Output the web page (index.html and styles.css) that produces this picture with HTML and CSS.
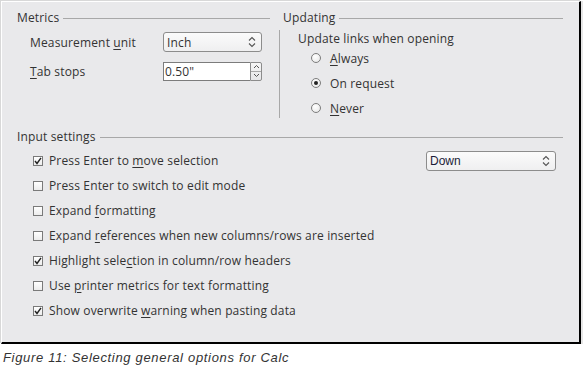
FILE: index.html
```html
<!DOCTYPE html>
<html>
<head>
<meta charset="utf-8">
<link rel="stylesheet" href="styles.css">
</head>
<body>
<div class="panel">
  <div class="top">
    <section class="col metrics">
      <div class="legend"><span>Metrics</span><i class="rule"></i></div>
      <div class="field-row first">
        <span class="lbl">Measurement <u>u</u>nit</span>
        <div class="select unit"><span class="val">Inch</span>
          <svg class="updown" width="8" height="12" viewBox="0 0 8 12"><path d="M1 4.5 L4 1.5 L7 4.5 M1 7.5 L4 10.5 L7 7.5" fill="none" stroke="#555" stroke-width="1.1"/></svg>
        </div>
      </div>
      <div class="field-row">
        <span class="lbl"><u>T</u>ab stops</span>
        <div class="spin"><span class="spin-input">0.50"</span>
          <span class="spin-btns">
            <span class="sb"><svg width="7" height="5" viewBox="0 0 7 5"><path d="M1 4 L3.5 1.5 L6 4" fill="none" stroke="#555" stroke-width="1"/></svg></span>
            <span class="sb"><svg width="7" height="5" viewBox="0 0 7 5"><path d="M1 1 L3.5 3.5 L6 1" fill="none" stroke="#555" stroke-width="1"/></svg></span>
          </span>
        </div>
      </div>
    </section>
    <section class="col updating">
      <div class="legend"><span>Updating</span><i class="rule"></i></div>
      <div class="upd-body">
        <div class="upd-title">Update links when opening</div>
        <div class="radios">
          <div class="radio-row"><span class="radio"></span><span><u>A</u>lways</span></div>
          <div class="radio-row"><span class="radio on"></span><span>On request</span></div>
          <div class="radio-row"><span class="radio"></span><span><u>N</u>ever</span></div>
        </div>
      </div>
    </section>
  </div>
  <section class="input">
    <div class="legend"><span>Input settings</span><i class="rule"></i></div>
    <div class="checks">
      <div class="check-row">
        <span class="cb on"><svg width="8" height="8" viewBox="0 0 8 8"><path d="M1 4 L3 6.5 L7 0.8" fill="none" stroke="#222" stroke-width="1.4"/></svg></span>
        <span>Press Enter to <u>m</u>ove selection</span>
        <div class="select down"><span class="val">Down</span>
          <svg class="updown" width="8" height="12" viewBox="0 0 8 12"><path d="M1 4.5 L4 1.5 L7 4.5 M1 7.5 L4 10.5 L7 7.5" fill="none" stroke="#555" stroke-width="1.1"/></svg>
        </div>
      </div>
      <div class="check-row"><span class="cb"></span><span>Press Enter to switch to edit mode</span></div>
      <div class="check-row"><span class="cb"></span><span>Expand <u>f</u>ormatting</span></div>
      <div class="check-row"><span class="cb"></span><span>Expand <u>r</u>eferences when new columns/rows are inserted</span></div>
      <div class="check-row">
        <span class="cb on"><svg width="8" height="8" viewBox="0 0 8 8"><path d="M1 4 L3 6.5 L7 0.8" fill="none" stroke="#222" stroke-width="1.4"/></svg></span>
        <span>Highlight sele<u>c</u>tion in column/row headers</span></div>
      <div class="check-row"><span class="cb"></span><span>Use <u>p</u>rinter metrics for text formatting</span></div>
      <div class="check-row">
        <span class="cb on"><svg width="8" height="8" viewBox="0 0 8 8"><path d="M1 4 L3 6.5 L7 0.8" fill="none" stroke="#222" stroke-width="1.4"/></svg></span>
        <span>Show overwrite <u>w</u>arning when pasting data</span></div>
    </div>
  </section>
</div>
<p class="caption">Figure 11: Selecting general options for Calc</p>
</body>
</html>
```

FILE: styles.css
```css
html, body {
  margin: 0;
  padding: 0;
  background: #ffffff;
}

body {
  width: 583px;
  height: 376px;
  overflow: hidden;
}

.panel {
  box-sizing: border-box;
  margin: 1px 0 0 1px;
  width: 580px;
  height: 343px;
  background: #e9e9eb;
  border-top: 1px solid #ffffff;
  border-left: 1px solid #ffffff;
  border-right: 2px solid #000000;
  border-bottom: 2px solid #000000;
  box-shadow: -1px -1px 0 #d8d8d8, 2px 0 0 #e6e6e6;
  padding: 8px 16px 0 15px;
  font-family: "Open Sans", "DejaVu Sans", sans-serif;
  font-size: 12px;
  letter-spacing: 0.15px;
  color: #333333;
}

u {
  text-decoration: underline;
  text-underline-offset: 2px;
}

.top {
  display: flex;
}

.col {
  display: flex;
  flex-direction: column;
}

.metrics {
  width: 253px;
}

.updating {
  width: 280px;
  margin-left: 13px;
}

.legend {
  display: flex;
  align-items: center;
  height: 16px;
  line-height: 16px;
  white-space: nowrap;
}

.legend .rule {
  flex: 1;
  height: 1px;
  background: #a8a8a8;
  margin-left: 4px;
}

.field-row {
  display: flex;
  align-items: center;
  height: 20px;
  margin-top: 9px;
  padding-left: 13px;
}

.field-row.first {
  margin-top: 6px;
}

.lbl {
  width: 133px;
  white-space: nowrap;
}

.select {
  box-sizing: border-box;
  height: 20px;
  border: 1px solid #8c8c8c;
  border-radius: 3px;
  background: linear-gradient(#fbfbfb, #efeff0);
  display: flex;
  align-items: center;
  padding: 0 5px 0 3px;
}

.select .val {
  flex: 1;
}

.select.unit {
  width: 99px;
}

.updown {
  display: block;
}

.spin {
  display: flex;
  height: 19px;
}

.spin-input {
  box-sizing: border-box;
  width: 87px;
  height: 19px;
  background: #ffffff;
  border: 1px solid #7c7c7c;
  border-right: none;
  line-height: 17px;
  padding-left: 1px;
}

.spin-btns {
  box-sizing: border-box;
  width: 12px;
  height: 19px;
  border: 1px solid #8c8c8c;
  border-radius: 0 2px 2px 0;
  display: flex;
  flex-direction: column;
  background: linear-gradient(#f6f6f6, #e6e6e8);
}

.sb {
  flex: 1;
  display: flex;
  align-items: center;
  justify-content: center;
}

.sb + .sb {
  border-top: 1px solid #a8a8a8;
}

.sb svg {
  display: block;
}

.upd-body {
  margin-top: 4px;
  margin-left: -4px;
  height: 88px;
  box-sizing: border-box;
  border-left: 1px solid #a8a8a8;
  padding: 1px 0 0 18px;
}

.upd-title {
  height: 16px;
  line-height: 16px;
}

.radios {
  margin-top: 3px;
  display: flex;
  flex-direction: column;
  gap: 9px;
}

.radio-row {
  display: flex;
  align-items: center;
  height: 16px;
  padding-left: 13px;
}

.radio {
  box-sizing: border-box;
  width: 10px;
  height: 10px;
  border-radius: 50%;
  border: 1px solid #7d7d7d;
  background: radial-gradient(circle at 40% 35%, #ffffff, #e4e4e4);
  margin-right: 9px;
  position: relative;
}

.radio.on::after {
  content: "";
  position: absolute;
  left: 2px;
  top: 2px;
  width: 4px;
  height: 4px;
  border-radius: 50%;
  background: #222222;
}

.input {
  margin-top: 11px;
}

.checks {
  margin-top: 3px;
  display: flex;
  flex-direction: column;
}

.check-row {
  display: flex;
  align-items: center;
  height: 25px;
  padding-left: 16px;
  white-space: nowrap;
}

.cb {
  box-sizing: border-box;
  width: 10px;
  height: 10px;
  border: 1px solid #7a7a7a;
  background: linear-gradient(#ffffff, #ececec);
  margin-right: 6px;
  display: flex;
  align-items: center;
  justify-content: center;
}

.cb svg {
  display: block;
}

.select.down {
  margin-left: auto;
  margin-right: 7px;
  width: 130px;
  font-family: "Liberation Sans", Arial, sans-serif;
  font-size: 12px;
  letter-spacing: 0;
  color: #1c1c38;
}

.caption {
  margin: 6px 0 0 3px;
  font-family: "Liberation Sans", Arial, sans-serif;
  font-style: italic;
  font-size: 13px;
  line-height: 16px;
  color: #333333;
  letter-spacing: 0.68px;
}
```
